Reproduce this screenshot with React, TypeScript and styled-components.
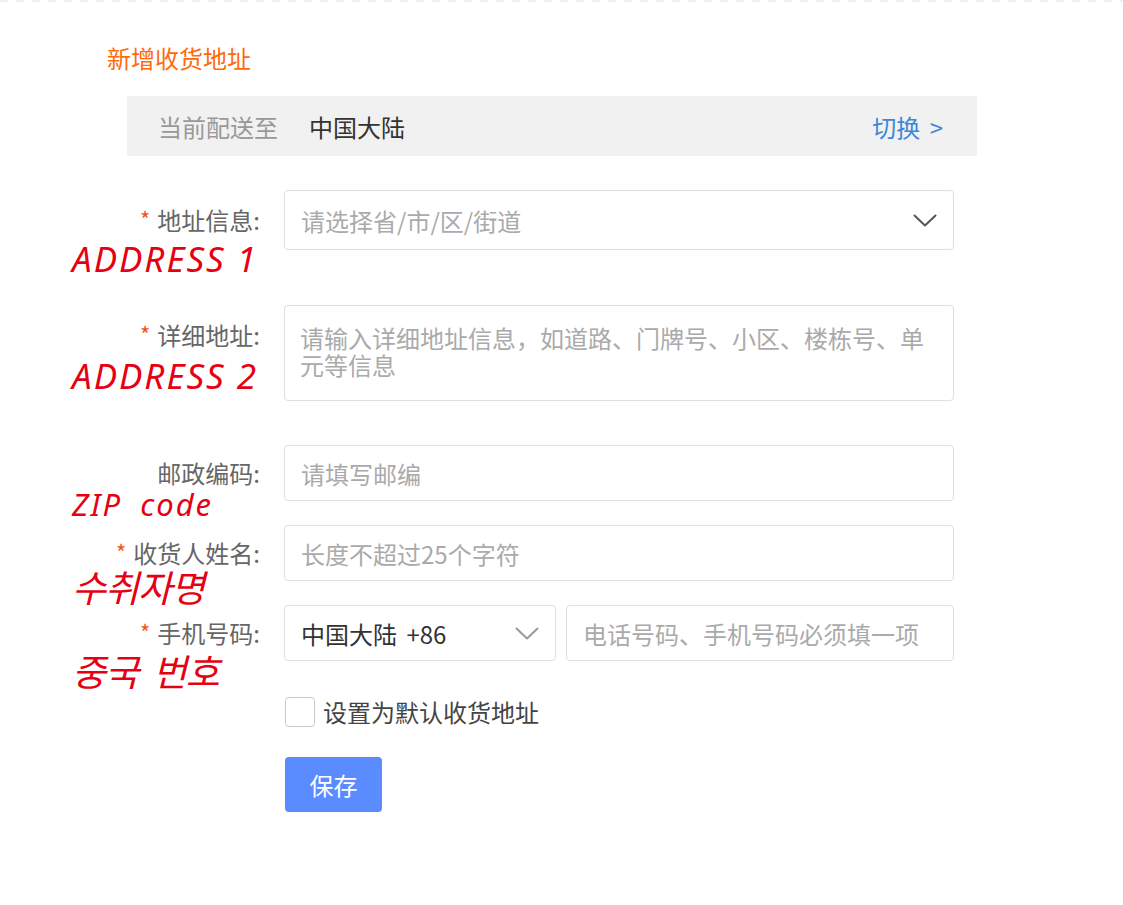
import styled, { createGlobalStyle } from "styled-components";

const GlobalStyle = createGlobalStyle`
  body {
    margin: 0;
    background: #fff;
    font-family: "Noto Sans CJK SC", "Noto Sans", sans-serif;
  }
`;

const DashLine = styled.div`
  height: 2px;
  background: repeating-linear-gradient(to right, #f0f0f0 0 8px, transparent 8px 16px);
`;

const Page = styled.div`
  padding: 38px 0 80px 72px;
`;

const Title = styled.h2`
  margin: 0 0 0 35px;
  font-size: 24px;
  line-height: 36px;
  font-weight: 400;
  color: #ff6a0a;
`;

const RegionBar = styled.div`
  margin: 20px 0 0 55px;
  width: 850px;
  height: 60px;
  box-sizing: border-box;
  padding: 0 34px 0 31px;
  background: #f1f1f1;
  display: flex;
  align-items: center;
  font-size: 24px;

  .hint {
    color: #999;
  }

  .region {
    margin-left: 31px;
    color: #333;
  }

  .switch {
    margin-left: auto;
    color: #3d87d9;
    word-spacing: 4px;
    cursor: pointer;
  }
`;

const Form = styled.div`
  margin-top: 34px;
  display: flex;
  flex-direction: column;
`;

const Row = styled.div<{ $gap: number }>`
  display: grid;
  grid-template-columns: 188px 670px;
  column-gap: 24px;
  align-items: start;
  margin-bottom: ${(p) => p.$gap}px;
`;

const LabelCell = styled.div<{ $height?: number }>`
  position: relative;
  height: ${(p) => p.$height ?? 56}px;
  display: flex;
  align-items: center;
  justify-content: flex-end;
  font-size: 24px;
  line-height: 1;
  color: #666;
  white-space: nowrap;
`;

const Star = styled.span`
  color: #f4511e;
  font-size: 22px;
  margin-right: 7px;
  align-self: center;
  transform: translateY(-2px);
`;

const Note = styled.span<{ $top: number; $size: number; $spacing?: number; $words?: number }>`
  position: absolute;
  left: 0;
  top: ${(p) => p.$top}px;
  font-family: "Noto Sans", "Noto Sans CJK KR", sans-serif;
  font-style: italic;
  font-size: ${(p) => p.$size}px;
  line-height: 1;
  letter-spacing: ${(p) => p.$spacing ?? 0}px;
  word-spacing: ${(p) => p.$words ?? 0}px;
  color: #e60012;
  white-space: nowrap;
  pointer-events: none;
`;

const SelectBox = styled.div<{ $height: number; $filled?: boolean; $width?: number }>`
  height: ${(p) => p.$height}px;
  width: ${(p) => (p.$width ? `${p.$width}px` : "auto")};
  flex: ${(p) => (p.$width ? "none" : "1")};
  box-sizing: border-box;
  border: 1px solid #dcdfe6;
  border-radius: 4px;
  padding: 0 16px;
  display: flex;
  align-items: center;
  justify-content: space-between;
  font-size: 24px;
  color: ${(p) => (p.$filled ? "#333" : "#aaa")};
  word-spacing: 4px;
  cursor: pointer;
`;

const TextInput = styled.input`
  height: 56px;
  width: 100%;
  flex: 1;
  min-width: 0;
  box-sizing: border-box;
  border: 1px solid #dcdfe6;
  border-radius: 4px;
  padding: 0 16px;
  font-family: inherit;
  font-size: 24px;
  color: #333;
  outline: none;

  &::placeholder {
    color: #aaa;
  }
`;

const TextArea = styled.textarea`
  height: 96px;
  width: 100%;
  box-sizing: border-box;
  border: 1px solid #dcdfe6;
  border-radius: 4px;
  padding: 18px 15px 0;
  font-family: inherit;
  font-size: 24px;
  line-height: 27px;
  color: #333;
  resize: none;
  overflow: hidden;
  outline: none;

  &::placeholder {
    color: #aaa;
  }
`;

const PhoneGroup = styled.div`
  display: flex;
  gap: 10px;
`;

const CheckLine = styled.label`
  display: flex;
  align-items: center;
  gap: 8px;
  height: 30px;
  line-height: 30px;
  font-size: 24px;
  color: #444;
  cursor: pointer;
`;

const CheckBox = styled.input`
  appearance: none;
  margin: 0 0 0 1px;
  width: 30px;
  height: 30px;
  border: 1px solid #c8c9cc;
  border-radius: 4px;
  background: #fff;

  &:checked {
    background: #5b8cff;
    border-color: #5b8cff;
  }
`;

const SaveButton = styled.button`
  margin-left: 1px;
  width: 97px;
  height: 55px;
  border: none;
  border-radius: 4px;
  background: #5b8cff;
  color: #fff;
  font-family: inherit;
  font-size: 24px;
  cursor: pointer;
`;

function Chevron({ color }: { color: string }) {
  return (
    <svg width="24" height="13" viewBox="0 0 24 13" fill="none">
      <path d="M1.5 1.5 L12 11.5 L22.5 1.5" stroke={color} strokeWidth="2" strokeLinecap="round" strokeLinejoin="round" />
    </svg>
  );
}

export default function App() {
  return (
    <>
      <GlobalStyle />
      <DashLine />
      <Page>
        <Title>新增收货地址</Title>
        <RegionBar>
          <span className="hint">当前配送至</span>
          <span className="region">中国大陆</span>
          <span className="switch">切换 &gt;</span>
        </RegionBar>

        <Form>
          <Row $gap={55}>
            <LabelCell $height={60}>
              <Star>*</Star>地址信息:
              <Note $top={51} $size={35} $spacing={2}>ADDRESS 1</Note>
            </LabelCell>
            <SelectBox $height={60}>
              <span>请选择省/市/区/街道</span>
              <Chevron color="#555" />
            </SelectBox>
          </Row>

          <Row $gap={44}>
            <LabelCell $height={60}>
              <Star>*</Star>详细地址:
              <Note $top={53} $size={35} $spacing={2}>ADDRESS 2</Note>
            </LabelCell>
            <TextArea placeholder="请输入详细地址信息，如道路、门牌号、小区、楼栋号、单元等信息" />
          </Row>

          <Row $gap={24}>
            <LabelCell>
              邮政编码:
              <Note $top={44} $size={31} $spacing={2} $words={8}>ZIP code</Note>
            </LabelCell>
            <TextInput placeholder="请填写邮编" />
          </Row>

          <Row $gap={24}>
            <LabelCell>
              <Star>*</Star>收货人姓名:
              <Note $top={44} $size={37} $spacing={-1}>수취자명</Note>
            </LabelCell>
            <TextInput placeholder="长度不超过25个字符" />
          </Row>

          <Row $gap={36}>
            <LabelCell>
              <Star>*</Star>手机号码:
              <Note $top={48} $size={37} $spacing={-1} $words={6}>중국 번호</Note>
            </LabelCell>
            <PhoneGroup>
              <SelectBox $height={56} $width={272} $filled>
                <span>中国大陆 +86</span>
                <Chevron color="#999" />
              </SelectBox>
              <TextInput placeholder="电话号码、手机号码必须填一项" />
            </PhoneGroup>
          </Row>

          <Row $gap={30}>
            <div />
            <CheckLine>
              <CheckBox type="checkbox" />
              设置为默认收货地址
            </CheckLine>
          </Row>

          <Row $gap={0}>
            <div />
            <div>
              <SaveButton>保存</SaveButton>
            </div>
          </Row>
        </Form>
      </Page>
    </>
  );
}
